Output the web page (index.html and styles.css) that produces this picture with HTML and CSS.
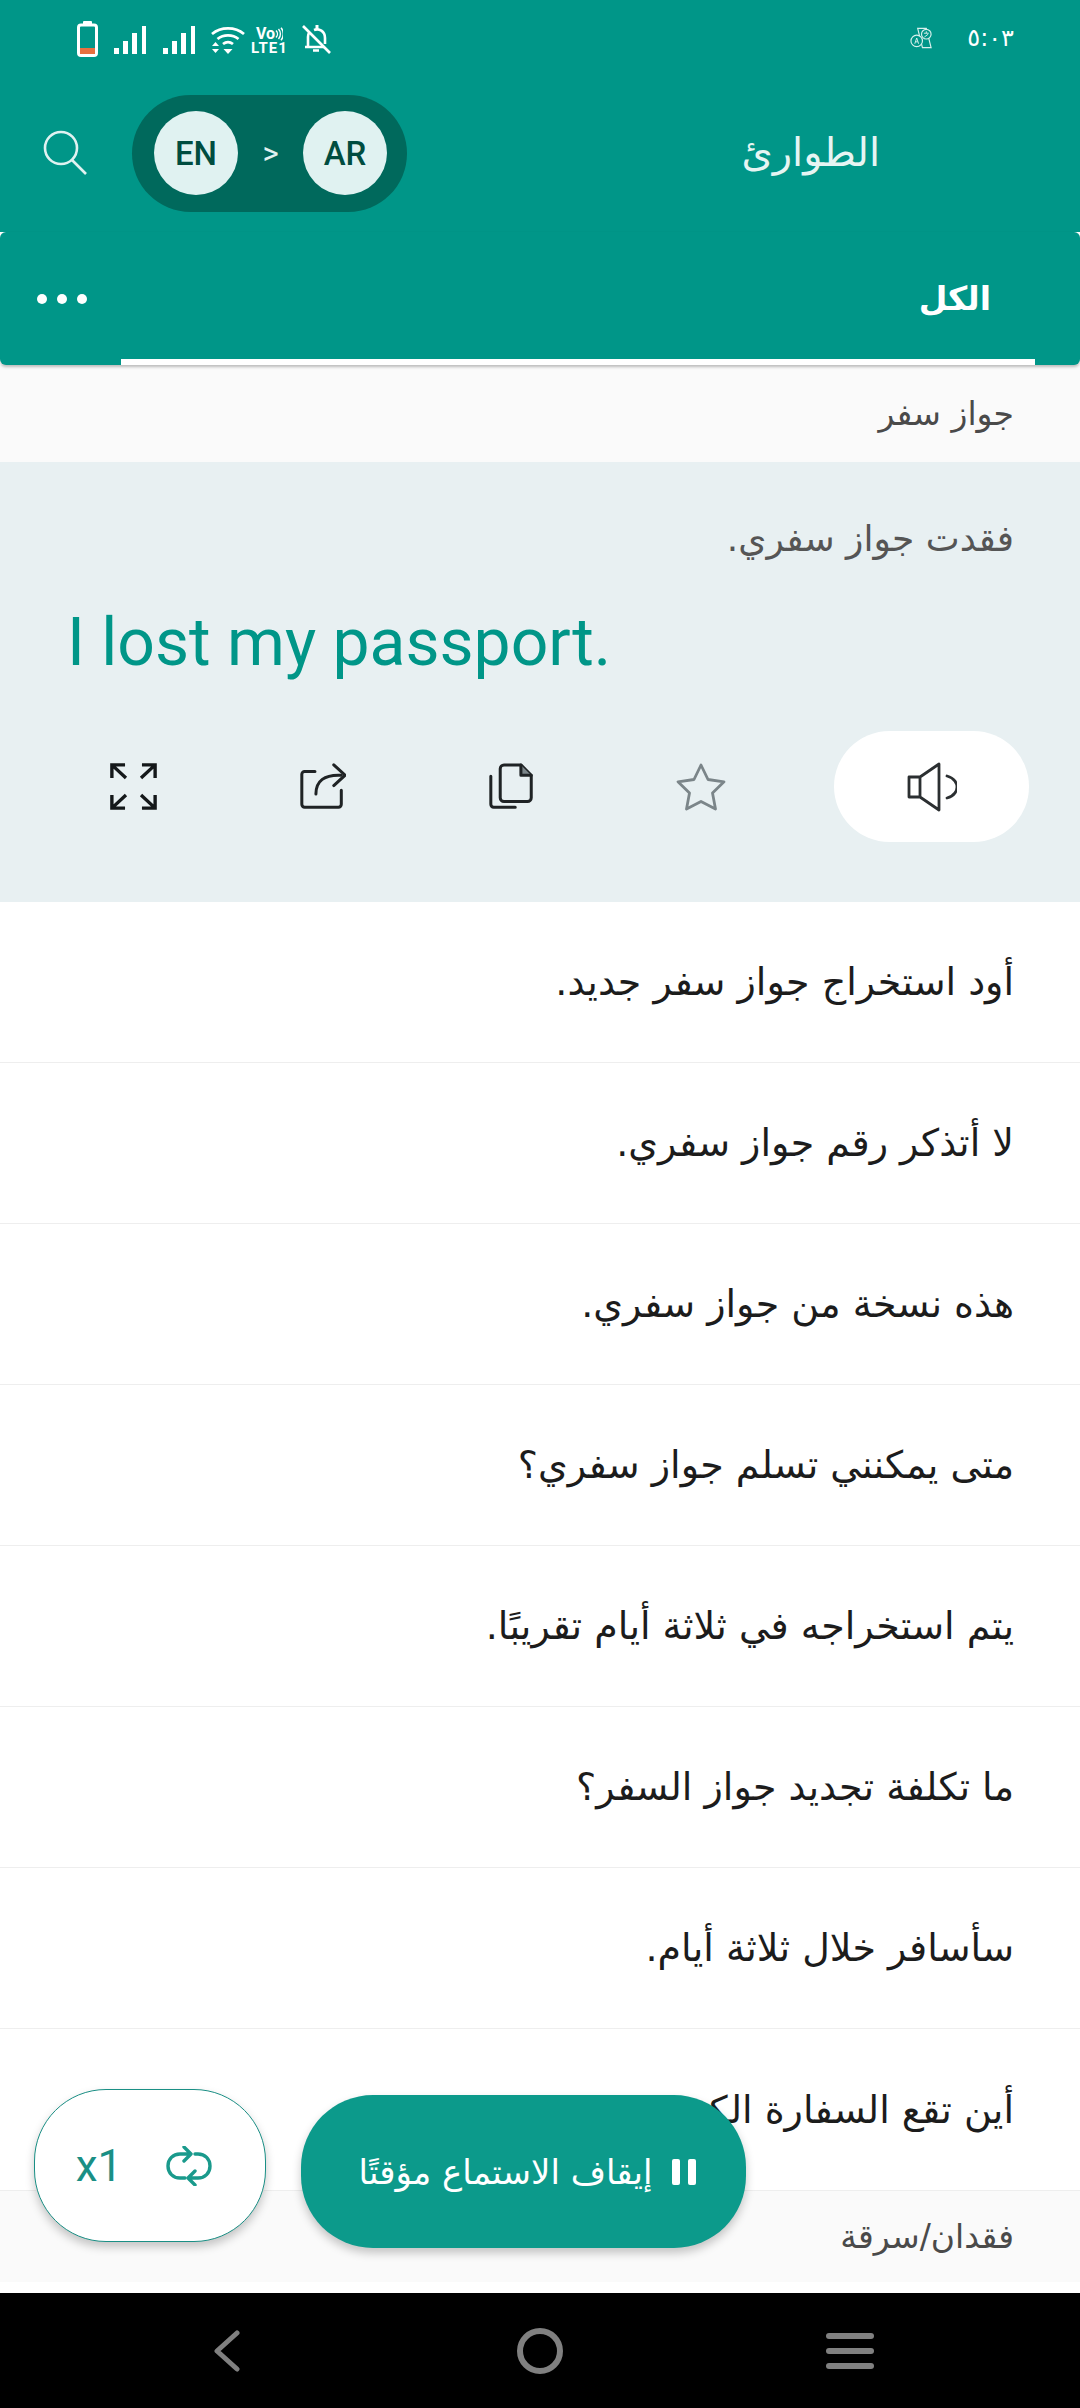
FILE: index.html
```html
<!DOCTYPE html>
<html lang="ar" dir="rtl">
<head>
<meta charset="utf-8">
<title>الطوارئ</title>
<link rel="stylesheet" href="styles.css">
</head>
<body>
<div class="app">
  <header class="top">
    <div class="status">
      <div class="status-right">
        <span class="clock">٥:٠٣</span>
        <svg class="ic-translate" viewBox="0 0 24 22" fill="none" stroke="#d7f0ec" stroke-width="1.2"><path d="M8 1h9l5 20h-9z"/><circle cx="7" cy="14" r="6" fill="#009688"/><circle cx="17" cy="7" r="5" fill="#009688"/><path d="M5 17l2-6 2 6M5.800 15h2.400M14.500 6h5M17 4v2M15 10l4-3" stroke-width="1"/></svg>
      </div>
      <div class="status-left">
        <svg class="ic-bell" viewBox="0 0 30 30" fill="none" stroke="#fff" stroke-width="2.600"><path d="M7 23V13c0-1.500.3-3 1-4M13 6c5-2 11 1 11 8v6M4 23h19M12 26.500h6"/><path d="M16 1v4" stroke-width="3"/><path d="M2 2l27 27"/></svg>
        <span class="volte"><span class="vo">Vo<svg class="vo-waves" viewBox="0 0 8 14" fill="none" stroke="#fff" stroke-width="1.400"><path d="M1 3.500a5 5 0 0 1 0 7M3.500 2a7.500 7.500 0 0 1 0 10M6 .8a9.500 9.500 0 0 1 0 12.400"/></svg></span><span class="lte">LTE1</span></span>
        <svg class="ic-wifi" viewBox="0 0 34 30" fill="none" stroke="#fff" stroke-width="2.800"><path d="M1 9c9-7.500 23-7.500 32 0M6.500 14c6-4.800 15-4.800 21 0M12 19c3-2.300 7-2.300 10 0"/><path d="M17 29l-4.500-5h9z" fill="#fff" stroke="none"/><path d="M1 21l3.500-4 3.500 4zM1 24h7l-3.500 4z" fill="#fff" stroke="none"/></svg>
        <svg class="ic-signal" viewBox="0 0 33 30" fill="#fff"><rect x="0" y="23" width="5" height="6"/><rect x="9" y="16" width="5" height="13"/><rect x="18" y="8" width="5" height="21"/><rect x="28" y="1" width="4" height="28"/></svg>
        <svg class="ic-signal" viewBox="0 0 33 30" fill="#fff"><rect x="0" y="23" width="5" height="6"/><rect x="9" y="16" width="5" height="13"/><rect x="18" y="8" width="5" height="21"/><rect x="28" y="1" width="4" height="28"/></svg>
        <svg class="ic-battery" viewBox="0 0 21 36"><rect x="6" y="0" width="9" height="5" rx="1" fill="#fff"/><rect x="1.500" y="4" width="18" height="30.500" rx="2.500" fill="none" stroke="#fff" stroke-width="3"/><rect x="3" y="27" width="15" height="6" fill="#e8703f"/></svg>
      </div>
    </div>
    <div class="toolbar">
      <h1 class="title">الطوارئ</h1>
      <div class="tools">
        <div class="lang-pill">
          <span class="lang">EN</span>
          <span class="lang-arrow">&gt;</span>
          <span class="lang">AR</span>
        </div>
        <svg class="ic-search" viewBox="0 0 48 48" fill="none" stroke="#e0f2f1" stroke-width="2.600"><circle cx="20" cy="20" r="16"/><path d="M31 32l14 14"/></svg>
      </div>
    </div>
    <nav class="tabs">
      <div class="tab">الكل</div>
      <div class="more"><i></i><i></i><i></i></div>
    </nav>
  </header>

  <div class="category">جواز سفر</div>

  <section class="card">
    <p class="card-ar">فقدت جواز سفري.</p>
    <p class="card-en" dir="ltr">I lost my passport.</p>
    <div class="actions">
      <button class="speak" aria-label="نطق">
        <svg viewBox="0 0 50 50" fill="none" stroke="#2b2f31" stroke-width="2.800" stroke-linejoin="round" stroke-linecap="round"><path d="M2 15h11v20H2zM13 15L32 2v46L13 35z"/><path d="M40 14c8 2 10 8 10 11s-2 9-10 11"/></svg>
      </button>
      <button class="act" aria-label="مفضلة">
        <svg viewBox="0 0 50 50" fill="none" stroke="#7b8589" stroke-width="2.800" stroke-linejoin="round"><path d="M25 3l7 14.500 16 2.300-11.500 11.300L39.500 47 25 39.500 10.500 47l3-15.900L2 19.800l16-2.300z"/></svg>
      </button>
      <button class="act" aria-label="نسخ">
        <svg class="ic-copy" viewBox="0 0 50 50" fill="none" stroke="#1f2325" stroke-width="3.200" stroke-linejoin="round" stroke-linecap="round"><path d="M13 6a4 4 0 0 1 4-4h18l11 11v24a4 4 0 0 1-4 4H17a4 4 0 0 1-4-4z"/><path d="M35 2v11h11" fill="#7b8589"/><path d="M3 14v30a3 3 0 0 0 3 3h23"/></svg>
      </button>
      <button class="act" aria-label="مشاركة">
        <svg class="ic-small" viewBox="0 0 50 50" fill="none" stroke="#1f2325" stroke-width="3.200" stroke-linejoin="round" stroke-linecap="round"><path d="M17 9H6a3 3 0 0 0-3 3v32a3 3 0 0 0 3 3h36a3 3 0 0 0 3-3V29"/><path d="M18 33c0-14 9-21 27-20"/><path d="M37 2l12 11-12 11"/></svg>
      </button>
      <button class="act" aria-label="ملء الشاشة">
        <svg class="ic-small" viewBox="0 0 50 50" fill="none" stroke="#14181a" stroke-width="3.600"><path d="M2 16V2h14M2 2l15 14M48 16V2H34M48 2L33 16M2 34v14h14M2 48l15-14M48 34v14H34M48 48L33 34"/></svg>
      </button>
    </div>
  </section>

  <ul class="list">
    <li class="row">أود استخراج جواز سفر جديد.</li>
    <li class="row">لا أتذكر رقم جواز سفري.</li>
    <li class="row">هذه نسخة من جواز سفري.</li>
    <li class="row">متى يمكنني تسلم جواز سفري؟</li>
    <li class="row">يتم استخراجه في ثلاثة أيام تقريبًا.</li>
    <li class="row">ما تكلفة تجديد جواز السفر؟</li>
    <li class="row">سأسافر خلال ثلاثة أيام.</li>
    <li class="row">أين تقع السفارة الكندية؟</li>
  </ul>

  <div class="category category-next">فقدان/سرقة</div>
  <div class="gap"></div>

  <footer class="navbar">
    <div class="nav-menu"><i></i><i></i><i></i></div>
    <div class="nav-home"></div>
    <svg class="nav-back" viewBox="0 0 30 42" fill="none" stroke="#808080" stroke-width="5" stroke-linecap="round" stroke-linejoin="round"><path d="M25 3L5 21l20 18"/></svg>
  </footer>

  <button class="fab-pause">
    <span class="pause-bars"><i></i><i></i></span>
    <span>إيقاف الاستماع مؤقتًا</span>
  </button>
  <button class="fab-repeat">
    <svg viewBox="0 0 46 40" fill="none" stroke="#1a9a8c" stroke-width="3.400" stroke-linecap="round" stroke-linejoin="round"><path d="M18 1l7 7-7 7M25 8H14C7 8 2 13 2 20s5 12 12 12h5"/><path d="M29 39l-7-7 7-7M22 32h10c7 0 12-5 12-12S39 8 32 8h-3"/></svg>
    <span class="rate">x1</span>
  </button>
</div>
</body>
</html>
```
FILE: styles.css
```css
* { box-sizing: border-box; }

html, body {
  margin: 0;
  padding: 0;
  background: #fff;
}

body {
  font-family: "DejaVu Sans", sans-serif;
  color: #212121;
}

.app {
  position: relative;
  width: 1080px;
  height: 2408px;
  overflow: hidden;
  display: flex;
  flex-direction: column;
}

/* Header */
.top {
  height: 365px;
  flex: none;
  background: linear-gradient(#009688 0, #009688 232px, #fff 232px);
  position: relative;
  z-index: 1;
  display: flex;
  flex-direction: column;
}

.status {
  height: 72px;
  flex: none;
  display: flex;
  justify-content: space-between;
  align-items: flex-start;
  padding: 0 66px 0 0;
}

.status-right {
  display: flex;
  align-items: center;
  gap: 34px;
  padding-top: 24px;
}

.clock {
  font-size: 24px;
  line-height: 28px;
  color: #fff;
}

.ic-translate { width: 23px; height: 22px; }

.status-left {
  display: flex;
  align-items: flex-end;
  height: 57px;
  padding-left: 77px;
  gap: 16px;
}

.ic-battery { width: 21px; height: 36px; }
.ic-signal { width: 33px; height: 30px; margin-bottom: 2px; }
.ic-wifi { width: 34px; height: 30px; margin: 0 -10px 2px -1px; }
.ic-bell { width: 30px; height: 32px; margin-bottom: 2px; }

.volte {
  display: flex;
  flex-direction: column;
  align-items: center;
  direction: ltr;
  font-family: Roboto, sans-serif;
  font-weight: 700;
  color: #fff;
  width: 37px;
  margin: 0 -3px 1px 0;
}

.vo {
  display: flex;
  align-items: center;
  font-size: 16px;
  line-height: 15px;
}

.vo-waves { width: 8px; height: 14px; }

.lte {
  font-size: 15px;
  line-height: 15px;
  letter-spacing: 1px;
}

.toolbar {
  height: 160px;
  flex: none;
  display: flex;
  align-items: center;
  padding: 0 200px 0 41px;
}

.title {
  margin: 0;
  font-size: 40px;
  font-weight: 400;
  color: #e6f5f3;
}

.tools {
  margin-right: auto;
  display: flex;
  align-items: center;
  gap: 43px;
}

.ic-search { width: 48px; height: 48px; }

.lang-pill {
  direction: ltr;
  width: 275px;
  height: 117px;
  margin-top: 2px;
  border-radius: 59px;
  background: #00695c;
  display: flex;
  align-items: center;
  justify-content: space-between;
  padding: 0 20px 0 22px;
}

.lang {
  width: 84px;
  height: 84px;
  border-radius: 50%;
  background: #e0f2f1;
  color: #004d40;
  font-family: Roboto, sans-serif;
  font-weight: 500;
  font-size: 33px;
  display: flex;
  align-items: center;
  justify-content: center;
}

.lang-arrow {
  font-family: Roboto, sans-serif;
  font-size: 31px;
  color: #e0f2f1;
}

.tabs {
  flex: 1;
  background: #009688;
  border-radius: 6px;
  box-shadow: 0 2px 3px rgba(0, 0, 0, .25);
  display: flex;
  align-items: stretch;
  justify-content: space-between;
  padding: 0 45px 0 37px;
}

.tab {
  width: 914px;
  border-bottom: 6px solid #fff;
  padding: 47px 44px 0 0;
  font-size: 33px;
  font-weight: 700;
  color: #fff;
}

.more {
  display: flex;
  gap: 10px;
  margin-top: 62px;
  height: 10px;
}

.more i {
  width: 10px;
  height: 10px;
  border-radius: 50%;
  background: #fff;
}

/* Category strips */
.category {
  height: 97px;
  flex: none;
  background: #fafafa;
  padding: 0 66px;
  display: flex;
  align-items: center;
  font-size: 33px;
  color: #4a4a4a;
}

.category-next {
  height: 92px;
  border-top: 1px solid #eee;
}

.gap { height: 11px; flex: none; background: #fff; }

/* Selected phrase */
.card {
  height: 440px;
  flex: none;
  background: #e8f0f2;
  padding-top: 47px;
}

.card p { margin: 0; padding: 0 66px; }

.card-ar {
  font-size: 36px;
  line-height: 60px;
  color: #555;
}

.card-en {
  margin-top: 29px !important;
  padding-left: 67px !important;
  font-family: Roboto, sans-serif;
  font-size: 66px;
  line-height: 90px;
  color: #009688;
  text-align: left;
}

.actions {
  margin-top: 43px;
  height: 111px;
  padding-right: 51px;
  display: flex;
}

.speak, .act {
  border: 0;
  padding: 0;
  background: none;
  display: flex;
  align-items: center;
  justify-content: center;
}

.speak {
  width: 195px;
  border-radius: 56px;
  background: #fff;
  margin-left: 39px;
}

.act { width: 189px; }
.speak svg, .act svg { width: 50px; height: 50px; }
.act .ic-small { width: 47px; height: 47px; }
.act .ic-copy { width: 47px; height: 47px; }

/* Phrase list */
.list {
  list-style: none;
  margin: 0;
  padding: 0;
  flex: 1;
}

.row {
  height: 161px;
  padding: 0 66px;
  border-bottom: 1px solid #eee;
  display: flex;
  align-items: center;
  font-size: 38px;
  color: #1c1c1c;
}

.row:last-child { border-bottom: 0; }

/* System navigation */
.navbar {
  height: 115px;
  flex: none;
  background: #000;
  display: flex;
  align-items: center;
  padding: 0 206px 0 0;
}

.nav-menu {
  width: 48px;
  display: flex;
  flex-direction: column;
  gap: 9px;
}

.nav-menu i {
  height: 6px;
  border-radius: 3px;
  background: #808080;
}

.nav-home {
  width: 46px;
  height: 46px;
  border: 6px solid #808080;
  border-radius: 50%;
  margin-right: 263px;
}

.nav-back {
  width: 30px;
  height: 42px;
  margin-right: 275px;
}

/* Floating controls */
.fab-pause {
  position: absolute;
  left: 301px;
  top: 2095px;
  width: 445px;
  height: 153px;
  border: 0;
  border-radius: 72px;
  background: #0c9a8b;
  box-shadow: 0 5px 10px rgba(0, 0, 0, .22);
  color: #fff;
  font-family: inherit;
  font-size: 34px;
  display: flex;
  align-items: center;
  justify-content: center;
  gap: 20px;
  padding: 0 0 0 8px;
}

.pause-bars { display: flex; gap: 8px; }

.pause-bars i {
  width: 8px;
  height: 26px;
  border-radius: 2px;
  background: #fff;
}

.fab-repeat {
  position: absolute;
  left: 34px;
  top: 2089px;
  width: 232px;
  height: 153px;
  border: 1px solid #1a8f85;
  border-radius: 72px;
  background: #fff;
  box-shadow: 0 5px 10px rgba(0, 0, 0, .22);
  display: flex;
  align-items: center;
  justify-content: center;
  gap: 44px;
  padding: 0 12px 0 0;
}

.fab-repeat svg { width: 46px; height: 40px; }

.rate {
  font-family: Roboto, sans-serif;
  font-size: 44px;
  color: #1a8f85;
}
```
